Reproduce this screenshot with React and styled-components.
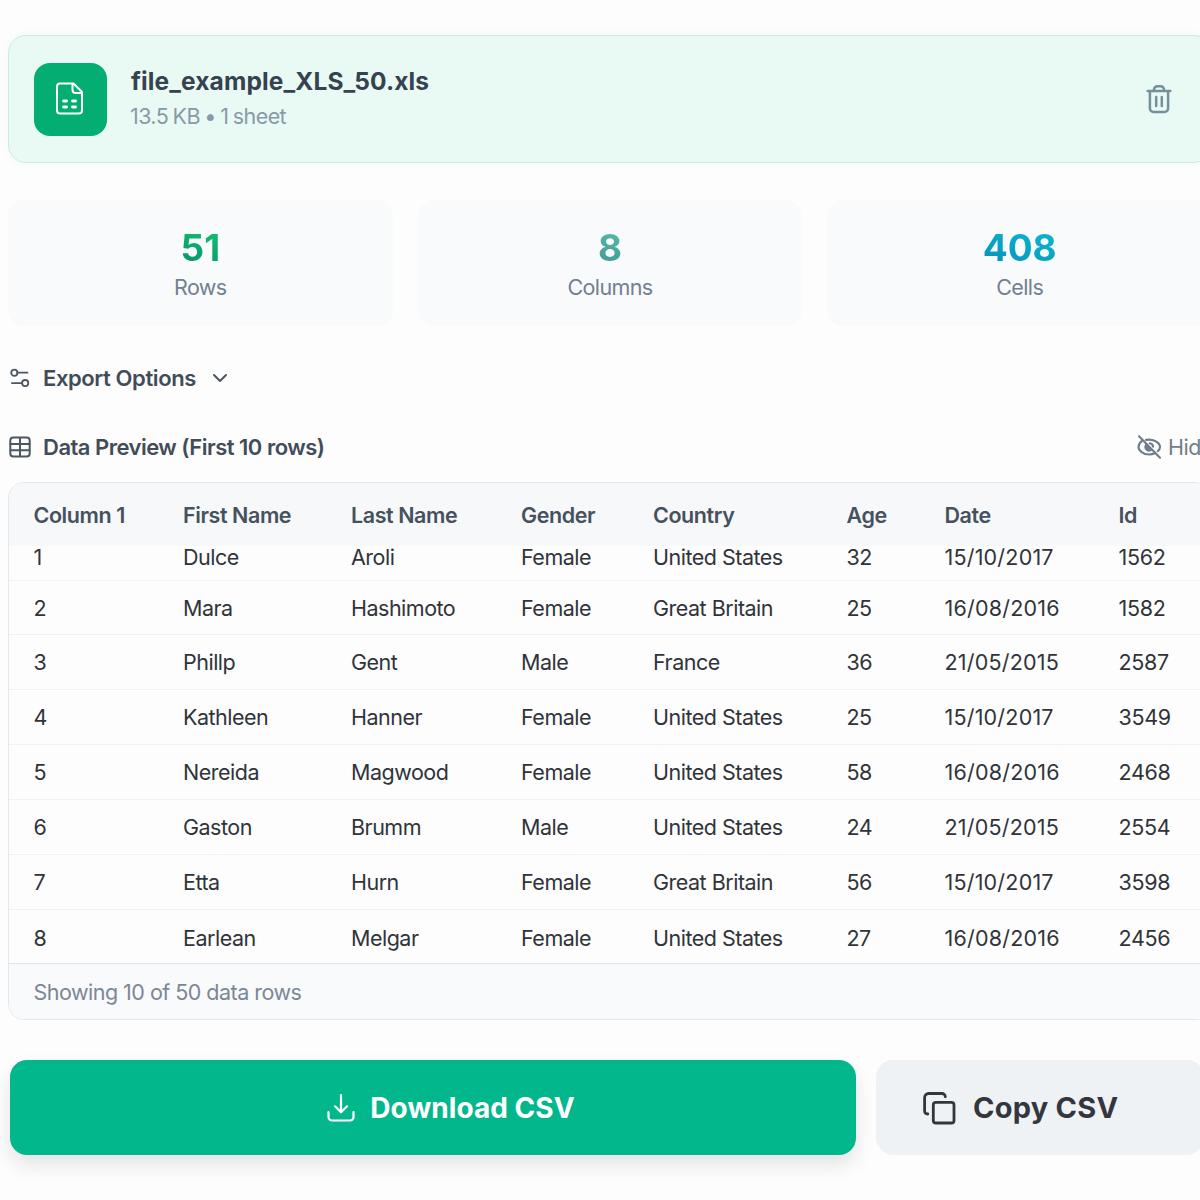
import React from 'react';
import styled, { createGlobalStyle } from 'styled-components';

const columns = [
  { title: 'Column 1', width: 149.5 },
  { title: 'First Name', width: 168 },
  { title: 'Last Name', width: 170 },
  { title: 'Gender', width: 132 },
  { title: 'Country', width: 193.5 },
  { title: 'Age', width: 98 },
  { title: 'Date', width: 174, spacing: 0.2 },
  { title: 'Id', width: 94, spacing: -0.3 },
];

const rows = [
  ['1', 'Dulce', 'Aroli', 'Female', 'United States', '32', '15/10/2017', '1562'],
  ['2', 'Mara', 'Hashimoto', 'Female', 'Great Britain', '25', '16/08/2016', '1582'],
  ['3', 'Phillp', 'Gent', 'Male', 'France', '36', '21/05/2015', '2587'],
  ['4', 'Kathleen', 'Hanner', 'Female', 'United States', '25', '15/10/2017', '3549'],
  ['5', 'Nereida', 'Magwood', 'Female', 'United States', '58', '16/08/2016', '2468'],
  ['6', 'Gaston', 'Brumm', 'Male', 'United States', '24', '21/05/2015', '2554'],
  ['7', 'Etta', 'Hurn', 'Female', 'Great Britain', '56', '15/10/2017', '3598'],
  ['8', 'Earlean', 'Melgar', 'Female', 'United States', '27', '16/08/2016', '2456'],
];

const stats = [
  { value: '51', label: 'Rows', from: '#12b76f', to: '#059c6b' },
  { value: '8', label: 'Columns', from: '#52b5a3', to: '#479d99' },
  { value: '408', label: 'Cells', from: '#0bb0cc', to: '#0799bd' },
];

const FileIcon = () => (
  <Icon $size={38} viewBox="0 0 38 38" $stroke={2}>
    <path d="M8 3.500h13.500L30 12v18.500a3 3 0 0 1-3 3H8a3 3 0 0 1-3-3V6.500a3 3 0 0 1 3-3z" />
    <path d="M20.500 4v6a3 3 0 0 0 3 3h6" />
    <path d="M11.500 21h3M20.500 21h3M11.500 27h3M20.500 27h3" strokeWidth="2.800" />
  </Icon>
);

const TrashIcon = () => (
  <Icon $size={32} viewBox="0 0 32 32" $stroke={2.5}>
    <path d="M4.700 8h22.600" />
    <path d="M10.800 7.500c.3-2.800 1.700-4.200 3.700-4.200h3c2 0 3.400 1.400 3.700 4.200" />
    <path d="M6.900 8.500v17a3.500 3.500 0 0 0 3.500 3.500h11.200a3.500 3.500 0 0 0 3.500-3.500v-17" />
    <path d="M13.200 14v9M18.800 14v9" />
  </Icon>
);

const OptionsIcon = () => (
  <Icon $size={22} viewBox="0 0 22 22" $stroke={1.8}>
    <circle cx="5.300" cy="5.700" r="3.100" />
    <path d="M8.500 5.700h10M2.900 16.100h10" />
    <circle cx="16.200" cy="16.100" r="3.100" />
  </Icon>
);

const ChevronIcon = () => (
  <Icon $size={18} viewBox="0 0 18 18" $stroke={2}>
    <path d="M3 6l6 6 6-6" />
  </Icon>
);

const TableIcon = () => (
  <Icon $size={22} viewBox="0 0 22 22" $stroke={2}>
    <rect x="1.300" y="1.500" width="19.400" height="19" rx="3" />
    <path d="M1.500 8h19M1.500 14.300h19M11 2v18" />
  </Icon>
);

const EyeOffIcon = () => (
  <Icon $size={26} viewBox="0 0 26 26" $stroke={2.1}>
    <path d="M3 2.300l21 21.500" />
    <path d="M6 6.800C3.800 8.400 2.500 10.800 2.500 13c0 3.600 4.800 7.500 10.700 7.500 2 0 3.900-.4 5.500-1.200" />
    <path d="M10 5.900c1-.2 2.100-.3 3.200-.3 5.800 0 10.800 3.700 10.800 7.400 0 1.500-.8 3-2.200 4.200" />
    <path d="M10 10a4.200 4.200 0 1 0 6 6z" fill="currentColor" strokeWidth="1" />
    <path d="M13.700 9.200a4 4 0 0 1 3.400 3.400" />
  </Icon>
);

const DownloadIcon = () => (
  <Icon $size={30} viewBox="0 0 30 30" $stroke={2.2}>
    <path d="M15 2v17M9 13.300l6 6 6-6" />
    <path d="M2.500 19v5a3.500 3.500 0 0 0 3.500 3.500h18a3.500 3.500 0 0 0 3.500-3.500v-5" />
  </Icon>
);

const CopyIcon = () => (
  <Icon $size={34} viewBox="0 0 34 34" $stroke={2.8}>
    <rect x="11.300" y="11.300" width="20.700" height="20.700" rx="2.600" />
    <path d="M5.800 23A3.200 3.200 0 0 1 2.600 20V6.500a4 4 0 0 1 4-4H20a3.300 3.300 0 0 1 3.300 3.300" />
  </Icon>
);

const App = () => (
  <>
    <GlobalStyle />
    <Page>
      <FileCard>
        <FileBadge>
          <FileIcon />
        </FileBadge>
        <FileInfo>
          <FileName>file_example_XLS_50.xls</FileName>
          <FileMeta>13.5 KB • 1 sheet</FileMeta>
        </FileInfo>
        <DeleteButton aria-label="Remove file">
          <TrashIcon />
        </DeleteButton>
      </FileCard>

      <Stats>
        {stats.map(stat => (
          <StatCard key={stat.label}>
            <StatValue $from={stat.from} $to={stat.to}>
              {stat.value}
            </StatValue>
            <StatLabel>{stat.label}</StatLabel>
          </StatCard>
        ))}
      </Stats>

      <OptionsToggle>
        <OptionsIcon />
        <SectionTitle>Export Options</SectionTitle>
        <ChevronIcon />
      </OptionsToggle>

      <PreviewBar>
        <TableIcon />
        <SectionTitle>Data Preview (First 10 rows)</SectionTitle>
        <HideButton>
          <EyeOffIcon />
          Hide
        </HideButton>
      </PreviewBar>

      <TableCard>
        <HeaderRow>
          {columns.map(column => (
            <HeaderCell key={column.title}>{column.title}</HeaderCell>
          ))}
        </HeaderRow>
        <TableBody>
          {rows.map(row => (
            <Row key={row[0]}>
              {row.map((cell, index) => (
                <Cell
                  key={columns[index].title}
                  $spacing={columns[index].spacing}
                >
                  {cell}
                </Cell>
              ))}
            </Row>
          ))}
        </TableBody>
        <TableFooter>Showing 10 of 50 data rows</TableFooter>
      </TableCard>

      <Actions>
        <DownloadButton>
          <DownloadIcon />
          Download CSV
        </DownloadButton>
        <CopyButton>
          <CopyIcon />
          Copy CSV
        </CopyButton>
      </Actions>
    </Page>
  </>
);

export default App;

const GlobalStyle = createGlobalStyle`
  * {
    box-sizing: border-box;
  }

  body {
    margin: 0;
    overflow: hidden;
    background-color: #fdfdfd;
    font-family: Inter, 'Liberation Sans', sans-serif;
  }

  button {
    border: none;
    padding: 0;
    background: none;
    font-family: inherit;
    cursor: pointer;
  }
`;

const Icon = styled.svg`
  flex-shrink: 0;
  width: ${({ $size }) => $size}px;
  height: ${({ $size }) => $size}px;
  fill: none;
  stroke: currentColor;
  stroke-width: ${({ $stroke }) => $stroke};
  stroke-linecap: round;
  stroke-linejoin: round;
`;

const Page = styled.main`
  display: flex;
  flex-direction: column;
  width: 1212px;
  height: 1200px;
  padding: 35px 0 0 8px;
  overflow: hidden;
`;

const FileCard = styled.section`
  display: flex;
  align-items: center;
  flex-shrink: 0;
  height: 128px;
  padding: 0 36px 0 25px;
  border: 1px solid #c5efe0;
  border-radius: 18px;
  background-color: #e9faf4;
  box-shadow: 0 0 12px rgba(0, 0, 0, 0.03);
`;

const FileBadge = styled.div`
  display: flex;
  align-items: center;
  justify-content: center;
  width: 73px;
  height: 73px;
  border-radius: 16px;
  background-color: #04ad72;
  color: #fff;
`;

const FileInfo = styled.div`
  display: flex;
  flex-direction: column;
  gap: 5px;
  margin: 0 auto 0 24px;
  padding-bottom: 3px;
`;

const FileName = styled.h1`
  margin: 0;
  color: #36424f;
  font-size: 24.5px;
  font-weight: 700;
  line-height: 32px;
  letter-spacing: 0.12px;
`;

const FileMeta = styled.p`
  margin: 0 0 0 -1px;
  color: #8a99a7;
  font-size: 21.5px;
  line-height: 28px;
  letter-spacing: -0.6px;
  word-spacing: -1px;
`;

const DeleteButton = styled.button`
  display: flex;
  color: #75909a;
`;

const Stats = styled.section`
  display: grid;
  grid-template-columns: repeat(3, 1fr);
  flex-shrink: 0;
  gap: 25px;
  margin-top: 37px;
`;

const StatCard = styled.div`
  display: flex;
  flex-direction: column;
  align-items: center;
  height: 126px;
  padding-top: 26px;
  border-radius: 16px;
  background-color: #f9fafc;
`;

const StatValue = styled.span`
  background-image: linear-gradient(
    200deg,
    ${({ $from }) => $from} 25%,
    ${({ $to }) => $to} 75%
  );
  background-clip: text;
  color: transparent;
  font-size: 37px;
  font-weight: 700;
  line-height: 44px;
`;

const StatLabel = styled.span`
  margin-top: 3px;
  color: #728090;
  font-size: 21.5px;
  line-height: 28px;
  letter-spacing: -0.6px;
`;

const OptionsToggle = styled.button`
  display: flex;
  align-items: center;
  align-self: flex-start;
  flex-shrink: 0;
  height: 32px;
  margin: 36px 0 0 1px;
  color: #4b5663;

  ${Icon}:last-child {
    margin-left: 15px;
  }
`;

const SectionTitle = styled.span`
  margin-left: 12px;
  color: #414c59;
  font-size: 22px;
  font-weight: 600;
  line-height: 32px;
  letter-spacing: -0.4px;
`;

const PreviewBar = styled.div`
  display: flex;
  align-items: center;
  flex-shrink: 0;
  height: 32px;
  margin: 37px 0 0 1px;
  color: #4b5663;

  ${SectionTitle} {
    letter-spacing: -0.51px;
  }
`;

const HideButton = styled.button`
  display: flex;
  align-items: center;
  gap: 6px;
  width: 76px;
  margin-left: auto;
  color: #6f7d8b;
  font-size: 21.5px;
  line-height: 32px;
  letter-spacing: -0.5px;
`;

const TableCard = styled.section`
  display: flex;
  flex-direction: column;
  flex-shrink: 0;
  height: 538px;
  margin-top: 19px;
  border: 1px solid #e3e7ee;
  border-radius: 16px;
  overflow: hidden;
`;

const TableRow = styled.div`
  display: grid;
  grid-template-columns: ${columns.map(({ width }) => `${width}px`).join(' ')};
  align-items: center;
  flex-shrink: 0;
  padding-left: 24.5px;
`;

const HeaderRow = styled(TableRow)`
  height: 63px;
  background-color: #f7f8fa;
`;

const HeaderCell = styled.div`
  color: #46515e;
  font-size: 21.5px;
  font-weight: 600;
  line-height: 28px;
  letter-spacing: -0.42px;
  white-space: nowrap;
`;

const TableBody = styled.div`
  display: flex;
  flex-direction: column;
  flex-shrink: 0;
  height: 417px;
  overflow: hidden;
`;

const Row = styled(TableRow)`
  height: 55px;
  border-bottom: 1px solid #eff1f5;

  &:first-child {
    height: 35px;
    align-items: end;
    padding-bottom: 11px;
  }

  &:nth-child(2) {
    height: 54px;
  }

  &:last-child {
    height: 53px;
    padding-top: 3px;
    border-bottom: none;
  }
`;

const Cell = styled.div`
  color: #30343a;
  font-size: 21.5px;
  line-height: 28px;
  letter-spacing: ${({ $spacing = -0.5 }) => $spacing}px;
  white-space: nowrap;

  ${Row}:first-child & {
    line-height: 23px;
  }
`;

const TableFooter = styled.div`
  display: flex;
  align-items: center;
  flex: 1;
  padding-left: 24.5px;
  border-top: 1px solid #e0e4ea;
  background-color: #f9fafc;
  color: #7c8796;
  font-size: 21.5px;
  letter-spacing: -0.52px;
`;

const Actions = styled.div`
  display: flex;
  flex-shrink: 0;
  gap: 20px;
  margin: 40px 0 0 2px;
`;

const ActionButton = styled.button`
  display: flex;
  align-items: center;
  height: 95px;
  border-radius: 17px;
  font-weight: 700;
`;

const DownloadButton = styled(ActionButton)`
  justify-content: center;
  gap: 14px;
  width: 846px;
  padding-left: 35px;
  background-color: #03b78d;
  color: #fff;
  font-size: 28px;
  letter-spacing: 0.05px;
  box-shadow: 0 10px 20px rgba(0, 0, 0, 0.1);
`;

const CopyButton = styled(ActionButton)`
  gap: 17px;
  width: 328px;
  padding-left: 46px;
  background-color: #eff2f5;
  color: #33373d;
  font-size: 29px;
  letter-spacing: 0.25px;
`;
